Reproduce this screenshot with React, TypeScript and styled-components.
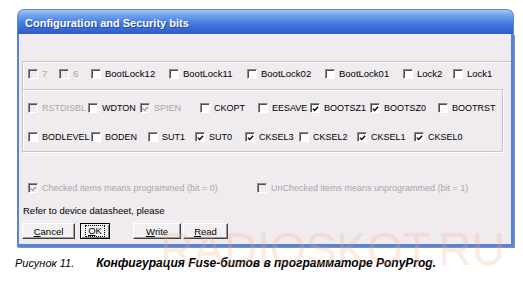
import styled, { createGlobalStyle } from 'styled-components';

const GlobalStyle = createGlobalStyle`
  html, body { margin: 0; padding: 0; background: #fff; }
  body {
    width: 523px;
    height: 285px;
    overflow: hidden;
    font-family: "Liberation Sans", Arial, sans-serif;
  }
`;

type Bit = { label: string; checked?: boolean; disabled?: boolean; w?: number };

const lockBits: Bit[] = [
    { label: '7', disabled: true, w: 31 },
    { label: '6', disabled: true, w: 32 },
    { label: 'BootLock12', w: 78 },
    { label: 'BootLock11', w: 78 },
    { label: 'BootLock02', w: 78 },
    { label: 'BootLock01', w: 78 },
    { label: 'Lock2', w: 50 },
    { label: 'Lock1' },
];

const fuseRow1: Bit[] = [
    { label: 'RSTDISBL', disabled: true, w: 60 },
    { label: 'WDTON', w: 52 },
    { label: 'SPIEN', checked: true, disabled: true, w: 60 },
    { label: 'CKOPT', w: 58 },
    { label: 'EESAVE', w: 52 },
    { label: 'BOOTSZ1', checked: true, w: 60 },
    { label: 'BOOTSZ0', checked: true, w: 68 },
    { label: 'BOOTRST' },
];

const fuseRow2: Bit[] = [
    { label: 'BODLEVEL', w: 63 },
    { label: 'BODEN', w: 57 },
    { label: 'SUT1', w: 47 },
    { label: 'SUT0', checked: true, w: 50 },
    { label: 'CKSEL3', checked: true, w: 54 },
    { label: 'CKSEL2', w: 58 },
    { label: 'CKSEL1', checked: true, w: 57 },
    { label: 'CKSEL0', checked: true },
];

const CheckBox = ({ checked, disabled }: { checked?: boolean; disabled?: boolean }) => (
    <Styled.Box $disabled={disabled}>
        {checked && (
            <svg width="8" height="8" viewBox="0 0 8 8">
                <path d="M1 3.6 L3 5.8 L7 1.4" fill="none" stroke={disabled ? '#a8a4a8' : '#000'} strokeWidth="1.6" />
            </svg>
        )}
    </Styled.Box>
);

const CheckItem = ({ label, checked, disabled, w, size }: Bit & { size?: number }) => (
    <Styled.Item $w={w}>
        <CheckBox checked={checked} disabled={disabled} />
        <Styled.Label $disabled={disabled} $size={size}>{label}</Styled.Label>
    </Styled.Item>
);

export default function App() {
    return (
        <Styled.Page>
            <GlobalStyle />
            <Styled.Window>
                <Styled.TitleBar>Configuration and Security bits</Styled.TitleBar>
                <Styled.Body>
                    <Styled.LockGroup>
                        <Styled.Row>
                            {lockBits.map((b) => <CheckItem key={b.label} size={9.5} {...b} />)}
                        </Styled.Row>
                    </Styled.LockGroup>
                    <Styled.FuseGroup>
                        <Styled.Row>
                            {fuseRow1.map((b) => <CheckItem key={b.label} {...b} />)}
                        </Styled.Row>
                        <Styled.Row>
                            {fuseRow2.map((b) => <CheckItem key={b.label} {...b} />)}
                        </Styled.Row>
                    </Styled.FuseGroup>
                    <Styled.Legend>
                        <CheckItem label="Checked items means programmed (bit = 0)" checked disabled w={229} />
                        <CheckItem label="UnChecked items means unprogrammed (bit = 1)" disabled />
                    </Styled.Legend>
                    <Styled.Note>Refer to device datasheet, please</Styled.Note>
                    <Styled.Buttons>
                        <Styled.Button $w={53}><u>C</u>ancel</Styled.Button>
                        <Styled.Button $w={30} $ml={5} $default><span><u>O</u>K</span></Styled.Button>
                        <Styled.Button $w={48} $ml={23}><u>W</u>rite</Styled.Button>
                        <Styled.Button $w={45} $ml={2}><u>R</u>ead</Styled.Button>
                    </Styled.Buttons>
                </Styled.Body>
            </Styled.Window>
            <Styled.Caption>
                <span>Рисунок 11.</span>
                <b>Конфигурация Fuse-битов в программаторе PonyProg.</b>
            </Styled.Caption>
            <Styled.Watermark>RADIOSKOT.RU</Styled.Watermark>
        </Styled.Page>
    );
}

const Styled = {
    Page: styled.div`
        position: relative;
        width: 523px;
        height: 285px;
        overflow: hidden;
        padding-top: 9px;
        box-sizing: border-box;
    `,
    Window: styled.div`
        width: 497px;
        margin-left: 17px;
        display: flex;
        flex-direction: column;
    `,
    TitleBar: styled.div`
        height: 25px;
        box-sizing: border-box;
        padding: 1px 0 0 7px;
        display: flex;
        align-items: center;
        border-radius: 7px 7px 0 0;
        background: linear-gradient(#a4c6f6 0%, #74a2ec 22%, #4a80e2 50%, #3a6cd8 75%, #2e5cc8 100%);
        border: 1px solid #5d8ad8;
        border-bottom: none;
        color: #fff;
        font: bold 11px "Liberation Sans", Arial, sans-serif;
        text-shadow: 1px 1px 0 #244c9c;
    `,
    Body: styled.div`
        display: flex;
        flex-direction: column;
        background: #efebef;
        border: solid #5684dc;
        border-width: 0 3px 3px 2px;
        box-shadow: 1px 1px 0 #8a90a8;
        padding: 27px 8px 5px 3px;
    `,
    LockGroup: styled.div`
        height: 28px;
        box-sizing: border-box;
        margin-right: -8px;
        padding: 5px 0 0 5px;
        border-top: 1px solid #c8c4c8;
        border-left: 1px solid #c8c4c8;
        box-shadow: inset 1px 1px 0 #fff;
    `,
    FuseGroup: styled.div`
        height: 63px;
        box-sizing: border-box;
        display: flex;
        flex-direction: column;
        gap: 15px;
        padding: 11px 0 0 5px;
        border: 1px solid #c8c4c8;
        box-shadow: inset 1px 1px 0 #fff, 1px 1px 0 #fff;
    `,
    Row: styled.div`
        display: flex;
        align-items: center;
        height: 14px;
    `,
    Item: styled.div<{ $w?: number }>`
        display: flex;
        align-items: center;
        gap: 4px;
        flex: 0 0 ${(p) => (p.$w ? `${p.$w}px` : 'auto')};
        white-space: nowrap;
    `,
    Box: styled.span<{ $disabled?: boolean }>`
        width: 10px;
        height: 10px;
        box-sizing: border-box;
        display: flex;
        align-items: center;
        justify-content: center;
        border: 1px solid;
        border-color: #8c888c #fff #fff #8c888c;
        box-shadow: inset 1px 1px 0 #505050;
        background: ${(p) => (p.$disabled ? '#efebef' : '#fff')};
        padding: 1px 0 0 1px;
    `,
    Label: styled.span<{ $disabled?: boolean; $size?: number }>`
        font-size: ${(p) => p.$size ?? 9}px;
        line-height: 14px;
        color: ${(p) => (p.$disabled ? '#aaa6aa' : '#000')};
    `,
    Legend: styled.div`
        display: flex;
        align-items: center;
        height: 16px;
        margin-top: 28px;
        padding-left: 6px;
    `,
    Note: styled.div`
        height: 14px;
        margin-top: 8px;
        padding-left: 1px;
        font-size: 9.5px;
        line-height: 14px;
        color: #000;
    `,
    Buttons: styled.div`
        display: flex;
        margin-top: 5px;
    `,
    Button: styled.button<{ $w: number; $ml?: number; $default?: boolean }>`
        width: ${(p) => p.$w}px;
        height: 16px;
        margin: 0 0 0 ${(p) => p.$ml ?? 0}px;
        padding: 0;
        box-sizing: border-box;
        font: 9.5px "Liberation Sans", Arial, sans-serif;
        color: #000;
        background: #f2f0f2;
        border: 1px solid;
        border-color: ${(p) => (p.$default ? '#000' : '#fff #404040 #404040 #fff')};
        box-shadow: ${(p) =>
            p.$default
                ? 'inset 1px 1px 0 #fff, inset -1px -1px 0 #808080'
                : 'inset -1px -1px 0 #a09ca0'};
        display: flex;
        align-items: center;
        justify-content: center;

        & > span {
            outline: 1px dotted #000;
            padding: 0 2px;
            line-height: 10px;
        }
    `,
    Caption: styled.div`
        display: flex;
        align-items: center;
        margin: 9px 0 0 15px;
        height: 14px;
        font: italic 11px "Liberation Sans", Arial, sans-serif;
        color: #000;

        & > b {
            margin-left: 22px;
            font-size: 12px;
            font-weight: bold;
        }
    `,
    Watermark: styled.div`
        position: absolute;
        left: 160px;
        top: 226px;
        font: 46px/46px "Liberation Sans", Arial, sans-serif;
        color: #f5a878;
        opacity: 0.22;
        pointer-events: none;
        white-space: nowrap;
    `,
};
